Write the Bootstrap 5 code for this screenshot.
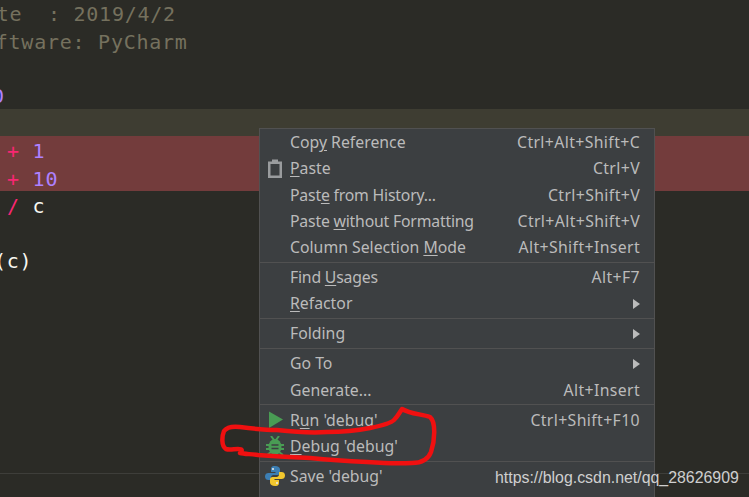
<!DOCTYPE html>
<html><head><meta charset="utf-8">
<link rel="stylesheet" href="https://cdn.jsdelivr.net/npm/bootstrap@5.3.0/dist/css/bootstrap.min.css">
<style>
html,body{margin:0;height:497px;overflow:hidden;background:#2b2b26}
.stage{position:relative;width:749px;height:497px;overflow:hidden;background:#2b2b26}
.editor{font-family:"DejaVu Sans Mono",monospace;font-size:20px;letter-spacing:.75px;color:#f8f8f2;margin-top:-.7px}
.cl{height:27.4px;line-height:27.4px;white-space:pre;padding-top:2px;box-sizing:border-box}
.cm{color:#75715e}.num{color:#ae81ff}.op{color:#f92672}
.cur{background:#3e3d32}.err{background:#733c3c}
.hline{height:1px;background:#3e3e3a;position:absolute;left:0;right:0;top:473px}
.ctx{position:absolute;left:259px;top:128px;width:396px;height:369px;overflow:hidden;background:#3c3f41;border:1px solid #515151;border-bottom:0;font-family:"Noto Sans",sans-serif;font-size:15.8px;color:#bbb}
.mi{height:26.3px;line-height:26.3px;padding:0 14px 0 30px;position:relative;white-space:nowrap}
.mi u{text-underline-offset:2px}
.sc{letter-spacing:.38px}
.tight{letter-spacing:-.2px}
.nextrow{margin-top:5px}
.ic{position:absolute;left:5px;top:3px;width:20px;height:20px}
.sep{height:1px;background:#515151;margin:1.2px 0 1.5px}
.arrow{width:0;height:0;border-left:7px solid #bbb;border-top:5px solid transparent;border-bottom:5px solid transparent;margin-right:0}
.scribble{position:absolute;left:0;top:0;pointer-events:none}
.wm{position:absolute;left:495px;top:467px;font-family:"Liberation Sans",sans-serif;font-size:15.9px;line-height:22px;color:#cfcfcf}
</style></head><body>
<div class="stage">
<div class="editor">
<div class="cl cm" style="margin-left:-16px">ate  : 2019/4/2</div>
<div class="cl cm" style="margin-left:-17px">oftware: PyCharm</div>
<div class="cl"> </div>
<div class="cl num" style="margin-left:-8px">0</div>
<div class="cl cur"> </div>
<div class="cl err" style="padding-left:7px"><span class="op">+</span> <span class="num">1</span></div>
<div class="cl err" style="padding-left:7px"><span class="op">+</span> <span class="num">10</span></div>
<div class="cl" style="padding-left:7px"><span class="op">/</span> c</div>
<div class="cl"> </div>
<div class="cl" style="margin-left:-6px">(c)</div>
</div>
<div class="hline"></div>

<div class="ctx">
<div class="mi d-flex justify-content-between"><span>Cop<u>y</u> Reference</span><span class="sc">Ctrl+Alt+Shift+C</span></div>
<div class="mi d-flex justify-content-between">
<svg class="ic" viewBox="0 0 20 20"><path fill="#9a9c9e" fill-rule="evenodd" d="M3 3.500h4V1.500h6v2h4V20H3zM5.500 6v11.500h9V6z"/></svg>
<span><u>P</u>aste</span><span class="sc">Ctrl+V</span></div>
<div class="mi d-flex justify-content-between"><span class="tight">Past<u>e</u> from History...</span><span class="sc">Ctrl+Shift+V</span></div>
<div class="mi d-flex justify-content-between"><span class="tight">Paste <u>w</u>ithout Formatting</span><span class="sc">Ctrl+Alt+Shift+V</span></div>
<div class="mi d-flex justify-content-between"><span>Column Selection <u>M</u>ode</span><span class="sc">Alt+Shift+Insert</span></div>
<div class="sep"></div>
<div class="mi d-flex justify-content-between"><span class="tight">Find <u>U</u>sages</span><span class="sc">Alt+F7</span></div>
<div class="mi d-flex justify-content-between align-items-center"><span><u>R</u>efactor</span><span class="arrow"></span></div>
<div class="sep"></div>
<div class="mi d-flex justify-content-between align-items-center"><span>Folding</span><span class="arrow"></span></div>
<div class="sep"></div>
<div class="mi d-flex justify-content-between align-items-center"><span>Go To</span><span class="arrow"></span></div>
<div class="mi d-flex justify-content-between"><span>Generate...</span><span class="sc">Alt+Insert</span></div>
<div class="sep"></div>
<div class="mi d-flex justify-content-between">
<svg class="ic" viewBox="0 0 20 20"><path fill="#499c54" d="M4 1.500l14 8-14 8.500z"/></svg>
<span>R<u>u</u>n 'debug'</span><span class="sc">Ctrl+Shift+F10</span></div>
<div class="mi d-flex justify-content-between">
<svg class="ic" viewBox="0 0 20 20"><g stroke="#499c54" stroke-width="2" fill="none"><path d="M6 0l3 4M14 0l-3 4M1 9h18M1 13h18M2 19l4-3M18 19l-4-3"/></g><ellipse cx="10" cy="11" rx="6.500" ry="8" fill="#499c54"/><path d="M6.500 9h7M6.500 12.500h7" stroke="#3c3f41" stroke-width="1.500"/></svg>
<span><u>D</u>ebug 'debug'</span></div>
<div class="sep"></div>
<div class="mi d-flex justify-content-between">
<svg class="ic" viewBox="0 0 20 20"><path fill="#3c7fb5" d="M10 0C6.500 0 6 1.500 6 3.500V6h4.500v1H3.500C1.500 7 0 8 0 10.500S1.500 14 3.500 14H6v-2.500C6 10 7 9 8.500 9h4C14 9 15 8 15 6.500V3.500C15 1.500 13 0 10 0z"/><path fill="#f2c72e" d="M10 20c3.500 0 4-1.500 4-3.500V14H9.500v-1h7c2 0 3.500-1 3.500-3.500S18.500 6 16.500 6H14v2.500C14 10 13 11 11.500 11h-4C6 11 5 12 5 13.500v3C5 18.500 7 20 10 20z"/><circle cx="8" cy="3" r="1" fill="#eee"/><circle cx="12" cy="17" r="1" fill="#eee"/></svg>
<span>Save 'debug'</span></div>
<div class="mi nextrow d-flex justify-content-between"><span>Show in Explorer</span></div>
</div>

<svg class="scribble" width="749" height="497" viewBox="0 0 749 497"><path d="M402 409C410 414 422 414 430 417C436 422 435 440 431 452C428 460 420 463 412 463C395 464 380 463 367 462C345 461 330 460 310 458C290 457 272 456 258 455C250 454 244 454 240 453C243 450 242 449 238 449C234 449 229 450 226 449C221 446 222 436 224 431C227 427 232 426 240 427C255 429 265 430 277 430C295 432 312 433 327 432C345 432 360 430 370 428C380 426 390 424 394 420C398 416 400 412 402 409z" fill="none" stroke="#f01010" stroke-width="4.500" stroke-linejoin="round"/></svg>
<div class="wm">https://blog.csdn.net/qq_28626909</div>
</div>
</body></html>
